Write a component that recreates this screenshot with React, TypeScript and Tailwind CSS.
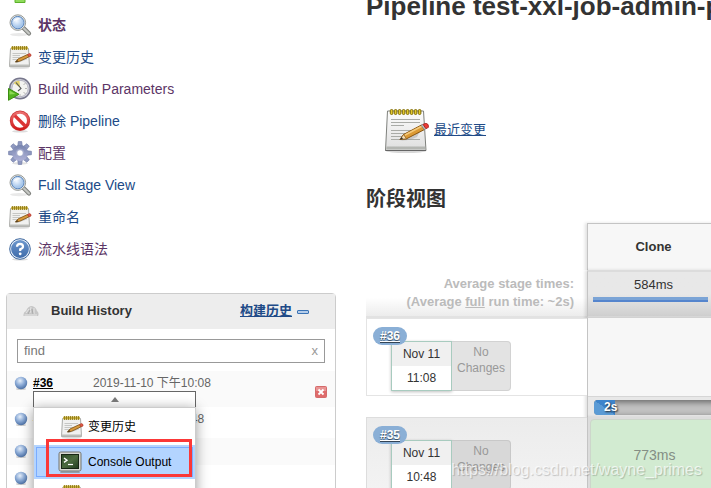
import type { ReactNode } from "react";

function SearchIcon() {
  return (
    <svg width="24" height="24" viewBox="0 0 24 24" className="shrink-0" aria-hidden="true">
      <defs>
        <radialGradient id="lens" cx="40%" cy="35%">
          <stop offset="0" stopColor="#f4f9ff" />
          <stop offset="1" stopColor="#a9c8ec" />
        </radialGradient>
      </defs>
      <ellipse cx="11" cy="21.6" rx="9" ry="1.6" fill="#e9e9e9" />
      <path d="M15.5 15 L21 20.500" stroke="#7d7f7b" strokeWidth="4.2" strokeLinecap="round" />
      <path d="M15.5 15 L21 20.500" stroke="#c4c6c2" strokeWidth="2.2" strokeLinecap="round" />
      <circle cx="9.8" cy="9.6" r="7.8" fill="#e6e8e5" stroke="#999b97" />
      <circle cx="9.8" cy="9.6" r="6.2" fill="url(#lens)" stroke="#5b86bd" />
      <path d="M5.500 9 C6 5.500 10 4 13 6 C10 6.500 7 7 5.500 9Z" fill="#fff" opacity=".8" />
    </svg>
  );
}

function NotepadIcon() {
  return (
    <svg width="24" height="24" viewBox="0 0 24 24" className="shrink-0" aria-hidden="true">
      <ellipse cx="11.500" cy="22.800" rx="10" ry="1" fill="#ddd" />
      <path d="M2.500 3.500 H20.500 L21.500 21.500 H1.500Z" fill="#f1f1f0" stroke="#a9aaa7" />
      <path d="M1.500 20.500 H21.500" stroke="#bdbebb" strokeWidth="2" />
      <rect x="3" y="1.500" width="17" height="3" rx="1" fill="#c9b23e" />
      <path d="M4.500 1 V5 M6.500 1 V5 M8.500 1 V5 M10.500 1 V5 M12.500 1 V5 M14.500 1 V5 M16.500 1 V5 M18.500 1 V5" stroke="#8a7413" strokeWidth=".8" />
      <path d="M4.500 8.500 H18 M4.500 10.500 H12 M4.500 12.500 H14 M4.500 14.500 H11" stroke="#c6c7c5" />
      <path d="M8 17.500 L19 13.500" stroke="#aaa" strokeWidth="1.600" opacity=".6" />
      <path d="M7.500 17 L10 14 L19.500 9.500 L21 11.800 L11.500 16.300Z" fill="#d99a3d" stroke="#86591a" strokeWidth=".9" strokeLinejoin="round" />
      <path d="M19.500 9.500 L21.500 8.600 Q23.500 9 23 11 L21 11.800Z" fill="#e05a45" stroke="#b03a2c" strokeWidth=".7" />
      <path d="M7 17.300 L9.200 14.900 L10.300 16.600Z" fill="#4d3a1c" />
    </svg>
  );
}

function LargeNotepadIcon() {
  return (
    <svg width="48" height="48" viewBox="0 0 48 48" className="shrink-0" aria-hidden="true">
      <defs>
        <linearGradient id="sheet" x1="0" y1="0" x2="0" y2="1">
          <stop offset="0" stopColor="#fdfdfd" />
          <stop offset="1" stopColor="#dedede" />
        </linearGradient>
      </defs>
      <ellipse cx="23" cy="45" rx="20" ry="2" fill="#d8d8d8" />
      <path d="M4.500 5 H40.500 L43 44.500 H2.500 Z" fill="url(#sheet)" stroke="#7f817d" strokeLinejoin="round" />
      <path d="M3.500 40.500 H42.200 V43.500 H3.200Z" fill="#b4b6b2" />
      <path d="M2.500 44.500 H43" stroke="#666" />
      <path d="M8 13.500 H37 M8 16.500 H37 M8 19.500 H21 M8 24.500 H34 M8 27.500 H28 M8 30.500 H24 M8 33.500 H37" stroke="#a9aba7" strokeWidth="1.200" />
      {[8.5, 12.5, 16.5, 20.5, 24.5, 28.5, 32.5, 36.5].map((x) => (
        <rect key={x} x={x - 1.2} y="3.500" width="2.600" height="5" rx="1.200" fill="#e2c82b" stroke="#7d6a08" />
      ))}
      <path d="M17 34.500 Q28 33 37 25 L34 31 Q26 35 17 34.500Z" fill="#8a8a8a" opacity=".35" />
      <path d="M17 33.500 L20.500 28.500 L38.500 19 L41.500 23.500 L23.500 32.800 Z" fill="#dc9a35" stroke="#85520e" strokeLinejoin="round" />
      <path d="M22 29 L39.200 20" stroke="#f4ca7c" strokeWidth="1.500" />
      <path d="M17 33.500 L20.500 28.500 L23.500 32.800Z" fill="#f3dfb8" stroke="#85520e" strokeWidth=".7" />
      <path d="M17 33.500 L18.800 31 L20 33Z" fill="#333" />
      <path d="M38 19.200 L40 18.300 L43 22.700 L41.200 23.700Z" fill="#b9bbb8" stroke="#777" strokeWidth=".6" />
      <path d="M40 18.300 L43 17.300 Q46 18 45.500 21.300 L43 22.700Z" fill="#ed3b36" stroke="#a61f1c" strokeWidth=".8" />
    </svg>
  );
}

function ClockPlayIcon() {
  return (
    <svg width="24" height="24" viewBox="0 0 24 24" className="shrink-0" aria-hidden="true">
      <circle cx="12" cy="11.500" r="10.300" fill="#d3d3dc" stroke="#77778c" strokeWidth="1.500" />
      <circle cx="12" cy="11.500" r="8.200" fill="#f4f4f1" stroke="#b4b4c2" />
      <path d="M12 10.500 L5.500 6 Q8 3.500 11.500 3.700Z" fill="#e4d36f" />
      <path d="M8 5.500 L13 11.500 L10 14" stroke="#55575a" strokeWidth="1.100" fill="none" />
      <path d="M17.500 11.500 h1 M12 17.500 v1 M16 7.500 l1-1 M16 15.500 l1 1" stroke="#777" />
      <path d="M0.500 11.500 L11 17.300 L0.500 23.300Z" fill="#53b421" stroke="#3b8d11" strokeLinejoin="round" />
      <path d="M1.500 13.500 L7.500 17 L1.500 17.500Z" fill="#8dd954" />
    </svg>
  );
}

function ForbiddenIcon() {
  return (
    <svg width="24" height="24" viewBox="0 0 24 24" className="shrink-0" aria-hidden="true">
      <defs>
        <linearGradient id="forbid" x1="0" y1="0" x2="0" y2="1">
          <stop offset="0" stopColor="#ee7474" />
          <stop offset="1" stopColor="#cf1616" />
        </linearGradient>
      </defs>
      <ellipse cx="12" cy="22.300" rx="8" ry="1.300" fill="#ddd" />
      <circle cx="12" cy="11.800" r="10.200" fill="#c93535" />
      <circle cx="12" cy="11.800" r="9.500" fill="url(#forbid)" />
      <circle cx="12" cy="11.800" r="7" fill="#fff" />
      <path d="M6.800 6.600 L17.200 17" stroke="#dc3636" strokeWidth="3.400" />
    </svg>
  );
}

function GearIcon() {
  return (
    <svg width="24" height="24" viewBox="0 0 24 24" className="shrink-0" aria-hidden="true">
      <defs>
        <linearGradient id="gear" x1="0" y1="0" x2="0" y2="24" gradientUnits="userSpaceOnUse">
          <stop offset="0" stopColor="#6878a4" />
          <stop offset="1" stopColor="#bfbfe2" />
        </linearGradient>
      </defs>
      <ellipse cx="12" cy="22.300" rx="8" ry="1.300" fill="#e2e2e2" />
      <g fill="#8f99c0" stroke="#7480aa" strokeWidth=".7">
        {[0, 45, 90, 135, 180, 225, 270, 315].map((a) => (
          <path key={a} d="M9.800 5 L10.300 0.600 H13.700 L14.200 5Z" transform={`rotate(${a} 12 12)`} />
        ))}
      </g>
      <circle cx="12" cy="12" r="8" fill="url(#gear)" />
      <circle cx="12" cy="12" r="4.300" fill="#a6add0" />
      <circle cx="12" cy="12" r="3.300" fill="#fff" stroke="#7c87b3" strokeWidth=".6" />
    </svg>
  );
}

function HelpIcon() {
  return (
    <svg width="24" height="24" viewBox="0 0 24 24" className="shrink-0" aria-hidden="true">
      <defs>
        <linearGradient id="help" x1="0" y1="0" x2="0" y2="1">
          <stop offset="0" stopColor="#6d97cd" />
          <stop offset="1" stopColor="#3f6cab" />
        </linearGradient>
      </defs>
      <ellipse cx="12" cy="22.300" rx="8" ry="1.300" fill="#ddd" />
      <circle cx="12" cy="12" r="10.300" fill="#e9f0f8" stroke="#3e689f" strokeWidth="1" />
      <circle cx="12" cy="12" r="8.900" fill="url(#help)" />
      <path d="M9 9.700 Q9.100 6.900 12.100 6.900 Q15 7 15 9.500 Q15 11.200 12.200 12.300 V14" fill="none" stroke="#fff" strokeWidth="2.200" />
      <circle cx="12.200" cy="16.800" r="1.400" fill="#fff" />
    </svg>
  );
}

function UpIcon() {
  return (
    <svg width="24" height="24" viewBox="0 0 24 24" className="shrink-0" aria-hidden="true">
      <path d="M12 2 L21 12 H17 V23.500 H7 V12 H3Z" fill="#8fdc5c" stroke="#5cb02b" />
    </svg>
  );
}

function TerminalIcon() {
  return (
    <svg width="24" height="24" viewBox="0 0 24 24" className="shrink-0" aria-hidden="true">
      <defs>
        <linearGradient id="screen" x1="0" y1="0" x2="1" y2="1">
          <stop offset="0" stopColor="#2c4a28" />
          <stop offset=".5" stopColor="#4c6b40" />
          <stop offset="1" stopColor="#1f3a1d" />
        </linearGradient>
      </defs>
      <path d="M3 21.500 H21 L22 22.800 H2Z" fill="#8d8f8a" />
      <rect x="1" y="2" width="22" height="19" rx="1.800" fill="#d7d8d4" stroke="#73756f" />
      <rect x="3.500" y="4.500" width="17" height="14" fill="url(#screen)" stroke="#172615" />
      <path d="M6 8 L9 10.200 L6 12.400" fill="none" stroke="#fff" strokeWidth="1.400" />
      <path d="M10 14.500 H15" stroke="#fff" strokeWidth="1.200" />
    </svg>
  );
}

function BlueBall() {
  return (
    <svg width="14" height="14" viewBox="0 0 14 14" className="shrink-0" role="img" aria-label="Success">
      <defs>
        <radialGradient id="ball" cx="42%" cy="32%" r="72%">
          <stop offset="0" stopColor="#e6effa" />
          <stop offset=".5" stopColor="#8cabd6" />
          <stop offset="1" stopColor="#44699f" />
        </radialGradient>
      </defs>
      <ellipse cx="7" cy="13" rx="5" ry="1" fill="#ccc" />
      <circle cx="7" cy="7" r="6.200" fill="url(#ball)" />
    </svg>
  );
}

function WeatherIcon() {
  return (
    <svg width="16" height="16" viewBox="0 0 16 16" className="shrink-0" aria-hidden="true">
      <path d="M0.500 13 Q0 9 3 8 Q5 3 9 3 Q13 4 14 8 Q16.500 10 15 13Z" fill="#c6c6c6" />
      <path d="M3 10 L6 6 M7 10 L8 4 M11 11 L11 5 M1.500 12 H14" stroke="#e6e6e6" />
      <path d="M5 11 L7 7 M10 11 L9 6" stroke="#a9a9a9" />
    </svg>
  );
}

function StopIcon() {
  return (
    <svg width="12" height="12" viewBox="0 0 12 12" aria-hidden="true">
      <rect x=".5" y=".5" width="11" height="11" rx="1" fill="#df6b6b" stroke="#d56b6b" />
      <path d="M1 1 H11 V5 H1Z" fill="#e99494" />
      <path d="M3.500 3.500 L8.500 8.500 M8.500 3.500 L3.500 8.500" stroke="#fff" strokeWidth="1.800" />
    </svg>
  );
}

type Task = { label: string; icon: ReactNode; visited?: boolean; current?: boolean };

const tasks: Task[] = [
  { label: "状态", icon: <SearchIcon />, visited: true, current: true },
  { label: "变更历史", icon: <NotepadIcon /> },
  { label: "Build with Parameters", icon: <ClockPlayIcon />, visited: true },
  { label: "删除 Pipeline", icon: <ForbiddenIcon /> },
  { label: "配置", icon: <GearIcon />, visited: true },
  { label: "Full Stage View", icon: <SearchIcon /> },
  { label: "重命名", icon: <NotepadIcon /> },
  { label: "流水线语法", icon: <HelpIcon />, visited: true },
];

function TaskList() {
  return (
    <nav className="pl-[2px]">
      <div className="flex h-[9px] items-end overflow-hidden pb-[6px]">
        <UpIcon />
      </div>
      {tasks.map((t) => (
        <a
          key={t.label}
          href="#"
          className={`flex h-8 items-center gap-[6px] text-sm ${t.visited ? "text-[#5c3566]" : "text-[#204a87]"} ${t.current ? "font-bold" : ""}`}
        >
          {t.icon}
          {t.label}
        </a>
      ))}
    </nav>
  );
}

function BuildMenu() {
  return (
    <div className="absolute top-5 left-[26px] z-10 w-[163px] text-xs text-black">
      <button aria-label="Toggle menu" className="flex h-4 w-full items-center justify-center border border-b-0 border-[#666] bg-white">
        <svg width="8" height="5" viewBox="0 0 8 5" aria-hidden="true">
          <path d="M0 5 L4 0 L8 5Z" fill="#777" />
        </svg>
      </button>
      <div className="h-[120px] border border-[#ccc] bg-white shadow-[0_2px_12px_rgba(0,0,0,0.4)]">
        <a href="#" className="flex h-[37px] items-center gap-1 pl-[26px]">
          <NotepadIcon />
          变更历史
        </a>
        <a href="#" className="flex h-[34px] items-center bg-[#b3d4ff] p-[2px]">
          <span className="flex h-[30px] flex-1 items-center gap-[6px] border border-[#7aacff] pl-[21px]">
            <TerminalIcon />
            Console Output
          </span>
        </a>
        <a href="#" aria-label="Parameters" className="flex h-[34px] items-center pl-[26px]">
          <NotepadIcon />
        </a>
      </div>
      <div className="pointer-events-none absolute top-[48px] left-[13px] h-[38px] w-[146px] border-3 border-[#fb3838]" />
    </div>
  );
}

function BuildHistory() {
  return (
    <section className="mt-7 rounded-t border border-[#ccc]">
      <header className="flex h-[35px] items-center bg-[#ededed] pr-[26px] pb-[2px] pl-4 text-[13px] font-bold">
        <WeatherIcon />
        <h2 className="ml-3 flex-1 text-[#333]">Build History</h2>
        <a href="#" className="text-[#204a87] underline">
          构建历史
        </a>
        <button aria-label="Collapse" className="mt-[2px] ml-[5px] h-1 w-3 rounded-[1px] border border-[#3b73b5] bg-[#b5cdea]" />
      </header>
      <div className="px-[10px] pt-[10px] pb-2">
        <div className="flex h-6 items-center border border-[#999] px-[6px]">
          <input
            aria-label="find"
            placeholder="find"
            className="min-w-0 flex-1 text-[13px] outline-none placeholder:text-[#777]"
          />
          <button aria-label="Clear" className="text-[13px] text-[#999]">
            x
          </button>
        </div>
      </div>
      <div className="text-xs text-[#666]">
        <div className="relative h-9 bg-[#fafafa] pl-[7px]">
          <div className="flex h-6 items-center">
            <BlueBall />
            <a href="#" className="ml-[5px] w-[60px] font-bold text-black underline">
              #36
            </a>
            <span>2019-11-10 下午10:08</span>
          </div>
          <button aria-label="Cancel" className="absolute top-[15px] right-2">
            <StopIcon />
          </button>
          <BuildMenu />
        </div>
        <div className="flex h-[31px] items-center bg-white pb-2 pl-[7px]">
          <BlueBall />
          <a href="#" className="ml-[5px] w-[60px] font-bold text-black underline">
            #35
          </a>
          <span>2019-11-10 下午9:48</span>
        </div>
        <div className="flex h-[27px] items-center bg-[#fafafa] pb-[2px] pl-[7px]">
          <BlueBall />
        </div>
        <div className="flex h-[27px] items-center bg-white pb-[2px] pl-[7px]">
          <BlueBall />
        </div>
      </div>
    </section>
  );
}

function RunCell({ id, time, dark }: { id: string; time: string; dark?: boolean }) {
  return (
    <div
      className={`relative h-[78px] border-y border-l pt-[22px] pl-6 font-normal ${
        dark ? "border-[#ddd] bg-linear-to-b from-[#ececec] to-[#f3f3f3]" : "border-[#e4e4e4] bg-white"
      }`}
    >
      <a
        href="#"
        className="absolute top-2 left-[6px] z-10 flex h-[18px] w-[34px] items-center justify-center rounded-full bg-[#8aafd6] text-xs font-bold text-white underline text-shadow-[0_1px_1px_#345]"
      >
        {id}
      </a>
      <div className="flex h-[50px] w-[120px] text-center text-xs">
        <div className="w-[61px] border border-[#a8cbbf] bg-white text-[#333] shadow-[0_1px_3px_rgba(0,0,0,0.25)]">
          <div className="h-6 bg-[#f0f0f0] leading-6">Nov 11</div>
          <div className="leading-6">{time}</div>
        </div>
        <div
          className={`flex-1 rounded-r border border-l-0 pt-[2px] leading-4 text-[#999] ${
            dark ? "border-[#c8c8c8] bg-[#d8d8d8]" : "border-[#d2d2d2] bg-[#e3e3e3]"
          }`}
        >
          No
          <br />
          Changes
        </div>
      </div>
    </div>
  );
}

function StageView() {
  return (
    <table className="mt-[10px] w-[353px] table-fixed border-separate border-spacing-0 text-[13px]">
      <colgroup>
        <col className="w-[221px]" />
        <col className="w-[132px]" />
      </colgroup>
      <thead>
        <tr>
          <td className="h-[47px] p-0" />
          <th className="border-t border-l border-[#c4c4c4] bg-[#f7f7f7] p-0 text-[#333] shadow-[-2px_0_3px_rgba(0,0,0,0.12)]">
            Clone
          </th>
        </tr>
        <tr>
          <th className="h-12 border-b-2 border-[#e2e2e2] bg-linear-to-b from-white from-60% to-[#ececec] p-0 pr-[13px] text-right leading-[18px] text-[#bbb]">
            Average stage times:
            <br />
            (Average <u>full</u> run time: ~2s)
          </th>
          <td className="border-t-2 border-b-2 border-l border-t-[#dcdcdc] border-b-[#dcdcdc] border-l-[#c4c4c4] bg-linear-to-b from-[#e8e8e8] from-50% to-[#cfcfcf] px-[5px] py-0 text-center align-top text-[#333] shadow-[-2px_0_3px_rgba(0,0,0,0.12)]">
            <div className="pt-[3px] leading-5">584ms</div>
            <div className="mt-[2px] mr-[6px] h-[5px] border-b-2 border-[#5585cd] bg-[#7ba4d6]" />
          </td>
        </tr>
      </thead>
      <tbody>
        <tr>
          <th className="h-[99px] p-0 align-top">
            <RunCell id="#36" time="11:08" />
          </th>
          <td className="border-l border-[#c4c4c4] bg-[#e8e8e8] p-0 align-top shadow-[-2px_0_3px_rgba(0,0,0,0.12)]">
            <div className="h-[79px] border-b border-[#d6d6d6] bg-[#f7f7f7]" />
            <div className="mt-[3px] ml-[6px] flex h-[15px] rounded bg-[#c2c2c2] shadow-[inset_0_2px_6px_rgba(0,0,0,0.5)]">
              <div className="w-[21px] rounded-l bg-linear-to-tr from-[#5b9bd5] from-50% to-[#3d84cb] to-50% pl-[10px] text-xs leading-[15px] font-bold whitespace-nowrap text-white text-shadow-[1px_1px_2px_#222]">
                2s
              </div>
            </div>
          </td>
        </tr>
        <tr>
          <th className="h-[99px] p-0 align-top">
            <RunCell id="#35" time="10:48" dark />
          </th>
          <td className="border-l border-[#c4c4c4] bg-[#dcdcdc] p-0 pt-[2px] pl-[2px] align-top shadow-[-2px_0_3px_rgba(0,0,0,0.12)]">
            <div className="flex h-[76px] items-center justify-center rounded border border-[#cdd6cb] bg-[#d2ebd1] pb-1 text-sm text-[#848e84]">
              773ms
            </div>
          </td>
        </tr>
      </tbody>
    </table>
  );
}

export default function App() {
  return (
    <div className="relative flex h-screen overflow-hidden bg-white font-['Liberation_Sans','Noto_Sans_CJK_SC',sans-serif]">
      <aside className="ml-[6px] w-[330px] shrink-0">
        <TaskList />
        <BuildHistory />
      </aside>
      <main className="ml-[30px] min-w-0 flex-1 overflow-hidden text-[#333]">
        <h1 className="-mt-[9px] text-[26px] leading-[30px] font-bold whitespace-nowrap">Pipeline test-xxl-job-admin-pipeline</h1>
        <div className="mt-[85px] ml-[17px] flex items-center gap-[3px]">
          <LargeNotepadIcon />
          <a href="#" className="text-[13px] text-[#204a87] underline">
            最近变更
          </a>
        </div>
        <h2 className="mt-[31px] text-[20px] leading-[28px] font-bold">阶段视图</h2>
        <StageView />
      </main>
      <div className="pointer-events-none absolute right-[9px] bottom-2 z-20 text-base leading-5 text-white/70 text-shadow-[1px_1px_1px_rgba(0,0,0,0.2)]">
        https://blog.csdn.net/wayne_primes
      </div>
    </div>
  );
}
